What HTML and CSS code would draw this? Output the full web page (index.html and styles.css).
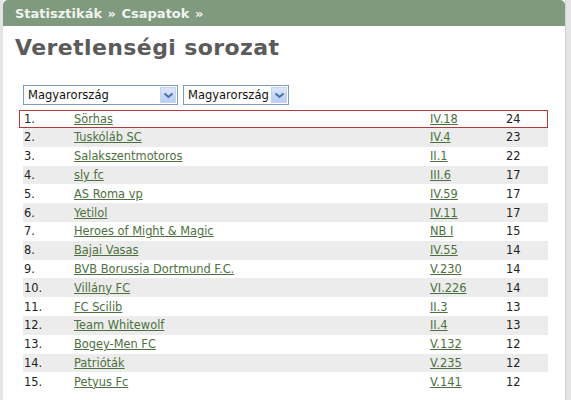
FILE: index.html
```html
<!DOCTYPE html>
<html>
<head>
<meta charset="utf-8">
<link rel="stylesheet" href="styles.css">
</head>
<body>
<div class="page">
  <div class="crumbs"><a>Statisztikák</a> » <a>Csapatok</a> »</div>
  <h1 class="title">Veretlenségi sorozat</h1>
  <div class="filters">
    <div class="select wide"><span>Magyarország</span><i class="arrow"><svg width="11" height="7" viewBox="0 0 11 7"><path d="M1.5 1.5 L5.5 5 L9.5 1.5" fill="none" stroke="#4a6ea8" stroke-width="2"/></svg></i></div>
    <div class="select"><span>Magyarország</span><i class="arrow"><svg width="11" height="7" viewBox="0 0 11 7"><path d="M1.5 1.5 L5.5 5 L9.5 1.5" fill="none" stroke="#4a6ea8" stroke-width="2"/></svg></i></div>
  </div>
  <div class="table">
    <div class="row hl"><span class="rank">1.</span><a class="name">Sörhas</a><a class="code">IV.18</a><span class="pts">24</span></div>
    <div class="row alt"><span class="rank">2.</span><a class="name">Tuskóláb SC</a><a class="code">IV.4</a><span class="pts">23</span></div>
    <div class="row"><span class="rank">3.</span><a class="name">Salakszentmotoros</a><a class="code">II.1</a><span class="pts">22</span></div>
    <div class="row alt"><span class="rank">4.</span><a class="name">sly fc</a><a class="code">III.6</a><span class="pts">17</span></div>
    <div class="row"><span class="rank">5.</span><a class="name">AS Roma vp</a><a class="code">IV.59</a><span class="pts">17</span></div>
    <div class="row alt"><span class="rank">6.</span><a class="name">Yetilol</a><a class="code">IV.11</a><span class="pts">17</span></div>
    <div class="row"><span class="rank">7.</span><a class="name">Heroes of Might &amp; Magic</a><a class="code">NB I</a><span class="pts">15</span></div>
    <div class="row alt"><span class="rank">8.</span><a class="name">Bajai Vasas</a><a class="code">IV.55</a><span class="pts">14</span></div>
    <div class="row"><span class="rank">9.</span><a class="name">BVB Borussia Dortmund F.C.</a><a class="code">V.230</a><span class="pts">14</span></div>
    <div class="row alt"><span class="rank">10.</span><a class="name">Villány FC</a><a class="code">VI.226</a><span class="pts">14</span></div>
    <div class="row"><span class="rank">11.</span><a class="name">FC Scilib</a><a class="code">II.3</a><span class="pts">13</span></div>
    <div class="row alt"><span class="rank">12.</span><a class="name">Team Whitewolf</a><a class="code">II.4</a><span class="pts">13</span></div>
    <div class="row"><span class="rank">13.</span><a class="name">Bogey-Men FC</a><a class="code">V.132</a><span class="pts">12</span></div>
    <div class="row alt"><span class="rank">14.</span><a class="name">Patrióták</a><a class="code">V.235</a><span class="pts">12</span></div>
    <div class="row"><span class="rank">15.</span><a class="name">Petyus Fc</a><a class="code">V.141</a><span class="pts">12</span></div>
  </div>
</div>
</body>
</html>
```

FILE: styles.css
```css
html, body {
  margin: 0;
  padding: 0;
  background: #e4e4e4;
  height: 100%;
}
body {
  font-family: "DejaVu Sans", Verdana, sans-serif;
  font-size: 11.4px;
  color: #222;
}
.page {
  margin: 0 5px 0 3px;
  background: #fff;
  min-height: 100%;
  border-right: 1px solid #d0d0d0;
}
.crumbs {
  background: #7f9a7e;
  border-radius: 5px 5px 0 0;
  height: 26px;
  line-height: 27px;
  padding-left: 12px;
  color: #f0f4ee;
  font-weight: bold;
  font-size: 13px;
  word-spacing: 1px;
}
.crumbs a { color: #f0f4ee; text-decoration: none; }
.title {
  margin: 0;
  padding: 7px 0 0 12px;
  font-size: 22px;
  line-height: 30px;
  color: #5b5b5b;
  font-weight: bold;
  letter-spacing: 0.4px;
}
.filters {
  display: flex;
  gap: 5px;
  padding: 22px 0 0 20px;
  height: 20px;
}
.select {
  display: flex;
  align-items: center;
  justify-content: space-between;
  border: 1px solid #7f9db9;
  height: 20px;
  padding: 0 1px 0 4px;
  font-family: "DejaVu Sans", sans-serif;
  font-size: 11.5px;
  color: #111;
  box-sizing: border-box;
  background: #fff;
}
.select.wide { width: 155px; }
.select:not(.wide) { width: 106px; }
.arrow {
  width: 16px;
  height: 16px;
  background: linear-gradient(#dbe6fb, #b9cdf4);
  border: 1px solid #c4d4f2;
  box-sizing: border-box;
  display: flex;
  align-items: center;
  justify-content: center;
}
.table {
  margin: 5px 0 0 16px;
  width: 529px;
}
.row {
  display: flex;
  align-items: center;
  height: 18.8px;
  padding-left: 1px;
  margin-left: 4px;
  box-sizing: border-box;
}
.row.alt { background: #ececec; }
.row.hl {
  border: 1px solid #b3393b;
  margin-left: 0;
  padding-left: 4px;
  height: 18px;
}
.rank { width: 50px; flex: none; }
.name { width: 356px; flex: none; }
.code { width: 76px; flex: none; }
a {
  color: #4d7040;
  text-decoration: underline;
}
```
